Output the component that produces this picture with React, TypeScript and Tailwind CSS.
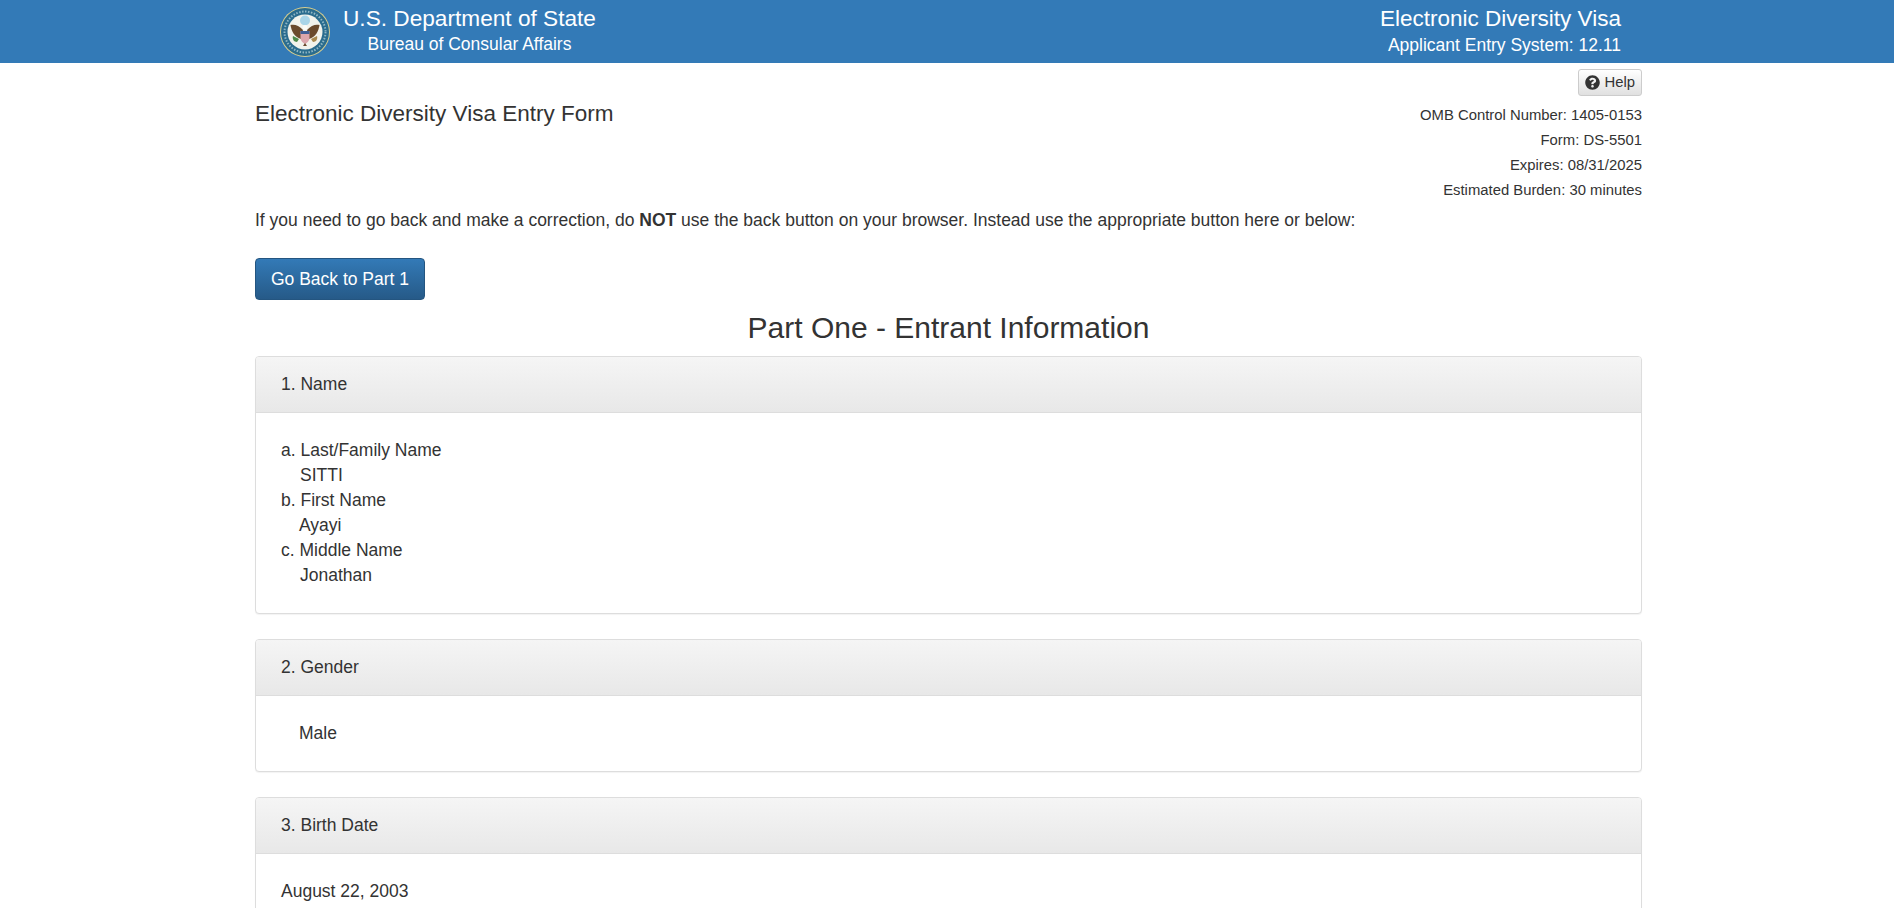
import React from 'react';
import { FaQuestionCircle } from 'react-icons/fa';

const Seal = () => (
  <svg width="52" height="52" viewBox="0 0 52 52" className="shrink-0">
    <circle cx="26" cy="26" r="25" fill="#d9cf8f" />
    <circle cx="26" cy="26" r="24" fill="#2a6c8e" />
    <circle cx="26" cy="26" r="20.5" fill="none" stroke="#8fb6c4" strokeWidth="2" strokeDasharray="1.5 1.5" />
    <circle cx="26" cy="26" r="17.5" fill="#f2f3ec" />
    <circle cx="26" cy="14.5" r="5" fill="#a9d5e8" />
    {/* wings */}
    <path d="M24 24 C20 19 15 18 11.5 19 C12.5 25 15 31 22 33 Z" fill="#6a4a2c" />
    <path d="M28 24 C32 19 37 18 40.5 19 C39.5 25 37 31 30 33 Z" fill="#6a4a2c" />
    <path d="M14 30 C13 33 15 36 18 36 L20 33 Z" fill="#4c8a4a" />
    <path d="M38 30 C39 33 37 36 34 36 L32 33 Z" fill="#a8894f" />
    {/* head */}
    <circle cx="26" cy="21.5" r="2.4" fill="#fbfbf6" />
    {/* shield */}
    <path d="M21.5 25 H30.5 V32 C30.5 35 28 37 26 38 C24 37 21.5 35 21.5 32 Z" fill="#dba6ac" />
    <rect x="21.5" y="25" width="9" height="3" fill="#3f5f96" />
    <path d="M24 40 L26 37 L28 40 Z" fill="#6a4a2c" />
  </svg>
);

const Panel = ({ title, children }: { title: string; children: React.ReactNode }) => (
  <div className="mb-[25px] rounded-[4px] border border-[#dddddd] bg-white shadow-[0_1px_1px_rgba(0,0,0,0.05)]">
    <div className="h-[56px] rounded-t-[3px] border-b border-[#dddddd] bg-gradient-to-b from-[#f5f5f5] to-[#e8e8e8] px-[25px] py-[15px]">
      {title}
    </div>
    <div className="p-[25px]">{children}</div>
  </div>
);

export default function App() {
  return (
    <div className="h-screen overflow-hidden bg-white font-['Liberation_Sans',Arial,sans-serif] text-[17.5px] leading-[25px] text-[#333333]">
      <header className="h-[63px] bg-[#337ab7] text-white">
        <div className="ml-[255px] flex h-full w-[1387px] justify-between pl-[24px] pr-[21px]">
          <div className="flex items-center gap-[12px]">
            <Seal />
            <div className="pb-[5px] text-center">
              <div className="text-[22.65px] leading-[30px]">U.S. Department of State</div>
              <div className="text-[17.5px] leading-[22px]">Bureau of Consular Affairs</div>
            </div>
          </div>
          <div className="text-right">
            <div className="pt-[4px] text-[22.5px] leading-[30px]">Electronic Diversity Visa</div>
            <div className="text-[17.5px] leading-[22px]">Applicant Entry System: 12.11</div>
          </div>
        </div>
      </header>

      <main className="ml-[255px] w-[1387px]">
        <div className="flex justify-between">
          <h1 className="mt-[38px] text-[22.5px] leading-[26px]">Electronic Diversity Visa Entry Form</h1>
          <div className="pt-[6px] text-right text-[14.85px]">
            <button className="mb-[7px] inline-flex h-[27px] items-center gap-[4px] rounded-[3px] border border-[#cccccc] bg-gradient-to-b from-white to-[#e0e0e0] px-[6px] text-[#333333] shadow-[0_1px_0_rgba(255,255,255,0.15)]">
              <FaQuestionCircle className="size-[15px]" />
              Help
            </button>
            <p>OMB Control Number: 1405-0153</p>
            <p>Form: DS-5501</p>
            <p>Expires: 08/31/2025</p>
            <p>Estimated Burden: 30 minutes</p>
          </div>
        </div>

        <p className="mt-[5px]">
          If you need to go back and make a correction, do <b>NOT</b> use the back button on your browser. Instead use the appropriate button here or below:
        </p>

        <button className="mt-[25px] block h-[42px] w-[170px] rounded-[4px] border border-[#245580] bg-gradient-to-b from-[#337ab7] to-[#265a88] text-white">
          Go Back to Part 1
        </button>

        <h2 className="mt-[11px] mb-[12px] text-center text-[30px] leading-[33px]">Part One - Entrant Information</h2>

        <Panel title="1. Name">
          <div>a. Last/Family Name</div>
          <div className="pl-[19px]">SITTI</div>
          <div>b. First Name</div>
          <div className="pl-[18px]">Ayayi</div>
          <div>c. Middle Name</div>
          <div className="pl-[19px]">Jonathan</div>
        </Panel>

        <Panel title="2. Gender">
          <div className="pl-[18px]">Male</div>
        </Panel>

        <Panel title="3. Birth Date">
          <div>August 22, 2003</div>
        </Panel>
      </main>
    </div>
  );
}
